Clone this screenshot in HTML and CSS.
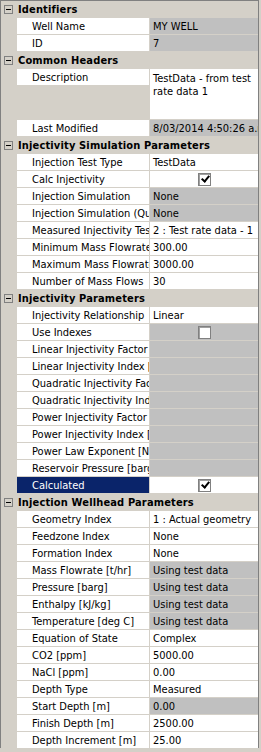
FILE: index.html
```html
<!DOCTYPE html>
<html lang="en">
<head>
  <meta charset="UTF-8" />
  <title>Well Properties</title>
  <link rel="stylesheet" href="styles.css">
</head>
<body>
  <div class="grid">
    <div class="cat"><span class="toggle"></span>Identifiers</div>
    <div class="row"><div class="name">Well Name</div><div class="val ro">MY WELL</div></div>
    <div class="row"><div class="name">ID</div><div class="val ro">7</div></div>

    <div class="cat"><span class="toggle"></span>Common Headers</div>
    <div class="row tall"><div class="name">Description</div><div class="val wrap">TestData - from test rate data 1</div></div>
    <div class="row"><div class="name">Last Modified</div><div class="val ro">8/03/2014 4:50:26 a.m.</div></div>

    <div class="cat"><span class="toggle"></span>Injectivity Simulation Parameters</div>
    <div class="row"><div class="name">Injection Test Type</div><div class="val">TestData</div></div>
    <div class="row"><div class="name">Calc Injectivity</div><div class="val"><span class="check on"></span></div></div>
    <div class="row"><div class="name">Injection Simulation</div><div class="val ro">None</div></div>
    <div class="row"><div class="name">Injection Simulation (Quadratic)</div><div class="val ro">None</div></div>
    <div class="row"><div class="name">Measured Injectivity Test</div><div class="val">2 : Test rate data - 1</div></div>
    <div class="row"><div class="name">Minimum Mass Flowrate [t/hr]</div><div class="val">300.00</div></div>
    <div class="row"><div class="name">Maximum Mass Flowrate [t/hr]</div><div class="val">3000.00</div></div>
    <div class="row"><div class="name">Number of Mass Flows</div><div class="val">30</div></div>

    <div class="cat"><span class="toggle"></span>Injectivity Parameters</div>
    <div class="row"><div class="name">Injectivity Relationship</div><div class="val">Linear</div></div>
    <div class="row"><div class="name">Use Indexes</div><div class="val ro"><span class="check"></span></div></div>
    <div class="row"><div class="name">Linear Injectivity Factor [t/hr/bar]</div><div class="val ro"></div></div>
    <div class="row"><div class="name">Linear Injectivity Index [t/hr/bar]</div><div class="val ro"></div></div>
    <div class="row"><div class="name">Quadratic Injectivity Factor</div><div class="val ro"></div></div>
    <div class="row"><div class="name">Quadratic Injectivity Index</div><div class="val ro"></div></div>
    <div class="row"><div class="name">Power Injectivity Factor [t/hr]</div><div class="val ro"></div></div>
    <div class="row"><div class="name">Power Injectivity Index [t/hr]</div><div class="val ro"></div></div>
    <div class="row"><div class="name">Power Law Exponent [N]</div><div class="val ro"></div></div>
    <div class="row"><div class="name">Reservoir Pressure [barg]</div><div class="val ro"></div></div>
    <div class="row selected"><div class="name">Calculated</div><div class="val"><span class="check on"></span></div></div>

    <div class="cat"><span class="toggle"></span>Injection Wellhead Parameters</div>
    <div class="row"><div class="name">Geometry Index</div><div class="val">1 : Actual geometry</div></div>
    <div class="row"><div class="name">Feedzone Index</div><div class="val">None</div></div>
    <div class="row"><div class="name">Formation Index</div><div class="val">None</div></div>
    <div class="row"><div class="name">Mass Flowrate [t/hr]</div><div class="val ro">Using test data</div></div>
    <div class="row"><div class="name">Pressure [barg]</div><div class="val ro">Using test data</div></div>
    <div class="row"><div class="name">Enthalpy [kJ/kg]</div><div class="val ro">Using test data</div></div>
    <div class="row"><div class="name">Temperature [deg C]</div><div class="val ro">Using test data</div></div>
    <div class="row"><div class="name">Equation of State</div><div class="val">Complex</div></div>
    <div class="row"><div class="name">CO2 [ppm]</div><div class="val">5000.00</div></div>
    <div class="row"><div class="name">NaCl [ppm]</div><div class="val">0.00</div></div>
    <div class="row"><div class="name">Depth Type</div><div class="val">Measured</div></div>
    <div class="row"><div class="name">Start Depth [m]</div><div class="val ro">0.00</div></div>
    <div class="row"><div class="name">Finish Depth [m]</div><div class="val">2500.00</div></div>
    <div class="row"><div class="name">Depth Increment [m]</div><div class="val">25.00</div></div>
  </div>
</body>
</html>
```

FILE: styles.css
```css
body {
  margin: 0;
  background-color: #d4d0c8;
  font-family: 'DejaVu Sans Condensed', 'Liberation Sans', sans-serif;
  font-size: 11px;
  color: #000;
}
.grid {
  width: 257px;
  border: 1px solid #808080;
  border-bottom: none;
  display: flex;
  flex-direction: column;
  gap: 1px;
}
.cat {
  height: 16px;
  line-height: 16px;
  font-weight: bold;
  letter-spacing: 0.15px;
  white-space: nowrap;
  overflow: hidden;
  display: flex;
  align-items: center;
  padding-top: 1px;
  box-sizing: border-box;
}
.toggle {
  position: relative;
  width: 7px;
  height: 7px;
  border: 1px solid #808080;
  margin: 3px 5px 0 3px;
  flex-shrink: 0;
  align-self: flex-start;
}
.toggle::after {
  content: "";
  position: absolute;
  left: 1px;
  top: 3px;
  width: 5px;
  height: 1px;
  background: #000;
}
.row {
  display: flex;
  height: 16px;
  padding-left: 16px;
  gap: 1px;
}
.row.tall {
  height: 50px;
}
.name {
  width: 117px;
  height: 15px;
  padding-left: 15px;
  padding-top: 1px;
  background: #fff;
  line-height: 16px;
  white-space: nowrap;
  overflow: hidden;
}
.val {
  flex: 1;
  min-width: 0;
  background: #fff;
  padding-left: 3px;
  padding-top: 1px;
  line-height: 16px;
  white-space: nowrap;
  overflow: hidden;
}
.val.ro {
  background: #c0c0c0;
}
.val.wrap {
  white-space: normal;
  line-height: 13px;
  padding-top: 3px;
  padding-right: 2px;
}
.selected .name {
  background: #0a246a;
  color: #fff;
}
.check {
  display: block;
  position: relative;
  width: 11px;
  height: 11px;
  margin: 1px 0 0 45px;
  background: #fff;
  border: 1px solid #808080;
  box-shadow: inset 1px 1px 0 #a0a0a0;
}
.check.on::after {
  content: "";
  position: absolute;
  left: 4px;
  top: 0;
  width: 3px;
  height: 6px;
  border: solid #000;
  border-width: 0 2px 2px 0;
  transform: rotate(40deg);
}
```
